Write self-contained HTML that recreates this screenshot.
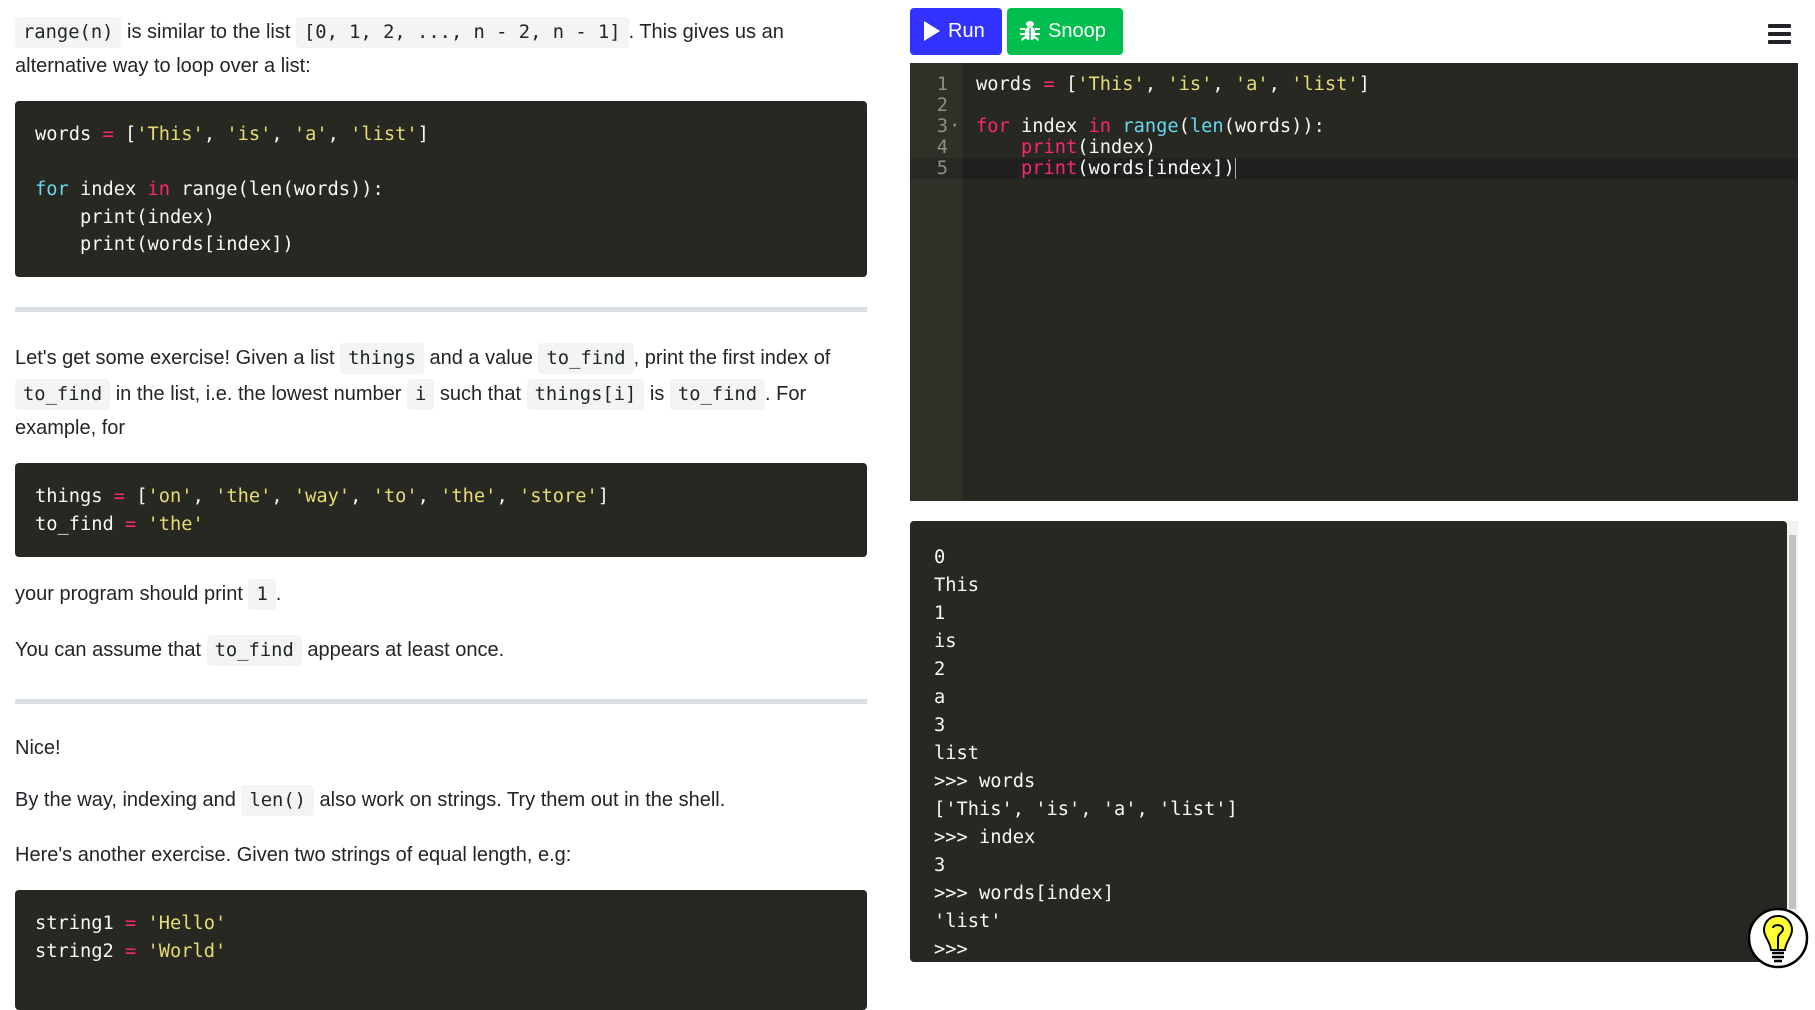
<!DOCTYPE html>
<html><head><meta charset="utf-8"><style>
*{margin:0;padding:0;box-sizing:border-box}
body{width:1815px;height:971px;overflow:hidden;background:#fff;font-family:"Liberation Sans",sans-serif;font-size:20px;color:#212529;position:relative}
.l{position:absolute;left:15px;white-space:nowrap;line-height:36px}
code,.m{font-family:"DejaVu Sans Mono","Liberation Mono",monospace;font-size:18.8px}
code{background:#f3f4f4;padding:5px 8px;border-radius:4px;color:#212529}
.cb{position:absolute;left:15px;width:852px;background:#272822;border-radius:4px;color:#f8f8f2;padding:0 20px;font-family:"DejaVu Sans Mono",monospace;font-size:18.7px;line-height:27.5px;white-space:pre}
.hr{position:absolute;left:15px;width:852px;height:5px;background:#dde0e2}
.k{color:#66d9ef}.p{color:#f92672}.s{color:#e6db74}
.btn{position:absolute;top:8px;height:47px;border-radius:4px;color:#fff;font-size:20px;line-height:47px;padding-left:14px}
#ed{position:absolute;left:910px;top:63px;width:888px;height:438px;background:#272822}
#gut{position:absolute;left:0;top:0;width:52px;height:100%;background:#2f3129}
.el{position:absolute;left:0;width:888px;height:21px;line-height:21px;font-family:"DejaVu Sans Mono",monospace;font-size:18.7px;color:#f8f8f2;white-space:pre}
.el .n{position:absolute;left:0;width:38px;text-align:right;color:#8f908a}
.el .c{position:absolute;left:66px}
#out{position:absolute;left:910px;top:521px;width:877px;height:441px;background:#272822;border-radius:4px;overflow:hidden}
.o{position:absolute;left:24px;font-family:"DejaVu Sans Mono",monospace;font-size:18.7px;color:#f8f8f2;white-space:pre;line-height:28px}
</style></head><body>
<div class="l" style="top:14px"><code>range(n)</code> is similar to the list <code>[0, 1, 2, ..., n - 2, n - 1]</code>. This gives us an</div>
<div class="l" style="top:48px">alternative way to loop over a list:</div>
<div class="cb" style="top:101px;height:176px;padding-top:20px">words <span class="p">=</span> [<span class="s">'This'</span>, <span class="s">'is'</span>, <span class="s">'a'</span>, <span class="s">'list'</span>]

<span class="k">for</span> index <span class="p">in</span> range(len(words)):
    print(index)
    print(words[index])</div>
<div class="hr" style="top:307px"></div>
<div class="l" style="top:340px">Let's get some exercise! Given a list <code>things</code> and a value <code>to_find</code>, print the first index of</div>
<div class="l" style="top:376px"><code>to_find</code> in the list, i.e. the lowest number <code>i</code> such that <code>things[i]</code> is <code>to_find</code>. For</div>
<div class="l" style="top:410px">example, for</div>
<div class="cb" style="top:463px;height:94px;padding-top:20px">things <span class="p">=</span> [<span class="s">'on'</span>, <span class="s">'the'</span>, <span class="s">'way'</span>, <span class="s">'to'</span>, <span class="s">'the'</span>, <span class="s">'store'</span>]
to_find <span class="p">=</span> <span class="s">'the'</span></div>
<div class="l" style="top:576px">your program should print <code>1</code>.</div>
<div class="l" style="top:632px">You can assume that <code>to_find</code> appears at least once.</div>
<div class="hr" style="top:699px"></div>
<div class="l" style="top:730px">Nice!</div>
<div class="l" style="top:782px">By the way, indexing and <code>len()</code> also work on strings. Try them out in the shell.</div>
<div class="l" style="top:837px">Here's another exercise. Given two strings of equal length, e.g:</div>
<div class="cb" style="top:890px;height:120px;padding-top:20px">string1 <span class="p">=</span> <span class="s">'Hello'</span>
string2 <span class="p">=</span> <span class="s">'World'</span></div>

<div class="btn" style="left:910px;width:92px;background:#3333ff"><svg width="18" height="22" viewBox="0 0 18 22" style="position:absolute;left:13px;top:12px"><path d="M1 1 L17 11 L1 21 Z" fill="#fff"/></svg><span style="position:absolute;left:38px">Run</span></div>
<div class="btn" style="left:1007px;width:116px;background:#00bf4f"><svg width="22" height="24" viewBox="0 0 22 24" style="position:absolute;left:12px;top:11px" fill="#fff"><ellipse cx="11" cy="5" rx="4" ry="3"/><rect x="6" y="8" width="10" height="13" rx="4"/><path d="M1 9h5v2H1zM16 9h5v2h-5zM1 14h5v2H1zM16 14h5v2h-5zM2 20l4-3 1 2-4 3zM20 20l-4-3-1 2 4 3z"/><rect x="10.3" y="9" width="1.4" height="12" fill="#00bf4f"/></svg><span style="position:absolute;left:41px">Snoop</span></div>
<div style="position:absolute;left:1768px;top:24px;width:23px;height:4px;background:#212529;border-radius:1px"></div>
<div style="position:absolute;left:1768px;top:32px;width:23px;height:4px;background:#212529;border-radius:1px"></div>
<div style="position:absolute;left:1768px;top:40px;width:23px;height:4px;background:#212529;border-radius:1px"></div>

<div id="ed"><div id="gut"></div>
<div class="el" style="top:11px"><span class="n">1</span><span class="c">words <span class="p">=</span> [<span class="s">'This'</span>, <span class="s">'is'</span>, <span class="s">'a'</span>, <span class="s">'list'</span>]</span></div>
<div class="el" style="top:32px"><span class="n">2</span></div>
<div class="el" style="top:53px"><span class="n">3<span style="font-size:9px;position:absolute;left:42px">▾</span></span><span class="c"><span class="p">for</span> index <span class="p">in</span> <span class="k">range</span>(<span class="k">len</span>(words)):</span></div>
<div class="el" style="top:74px"><span class="n">4</span><span class="c">    <span class="p">print</span>(index)</span></div>
<div class="el" style="top:95px;background:#202020"><span class="n" style="background:#272922;width:52px;padding-right:14px">5</span><span class="c">    <span class="p">print</span>(words[index])<span style="border-left:1px solid #aaa"></span></span></div>
</div>

<div id="out">
<div class="o" style="top:23px">0
This
1
is
2
a
3
list
&gt;&gt;&gt; words
['This', 'is', 'a', 'list']
&gt;&gt;&gt; index
3
&gt;&gt;&gt; words[index]
'list'
&gt;&gt;&gt;</div>
</div>
<div style="position:absolute;left:1787px;top:521px;width:11px;height:441px;background:#f1f1f1"></div>
<div style="position:absolute;left:1789px;top:535px;width:7px;height:374px;background:#c1c1c1"></div>
<svg width="64" height="64" viewBox="0 0 64 64" style="position:absolute;left:1746px;top:906px"><ellipse cx="32" cy="32" rx="29" ry="29" fill="#fff" stroke="#000" stroke-width="2.5"/><path d="M32 10c-9 0-14 7-14 14 0 7 6 11 7 20h14c1-9 7-13 7-20 0-7-5-14-14-14z" fill="#ffff33" stroke="#000" stroke-width="2"/><path d="M27 22c0-4 10-4 10 1 0 4-5 4-5 9v11" fill="none" stroke="#000" stroke-width="2"/><path d="M26 47h12M26 51h12M28 55h8" stroke="#000" stroke-width="2.5"/></svg>
</body></html>
